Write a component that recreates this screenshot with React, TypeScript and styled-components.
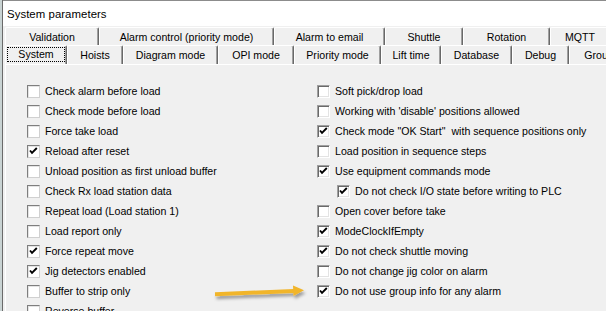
import React from "react";
import styled, { createGlobalStyle, css } from "styled-components";

const Global = createGlobalStyle`
  html, body { margin: 0; padding: 0; background: #dfe5e5; }
  body { font-family: "Liberation Sans", Arial, sans-serif; }
  #root { width: 606px; height: 311px; overflow: hidden; }
`;

const Screen = styled.div`
  position: relative;
  width: 606px;
  height: 311px;
  overflow: hidden;
  padding-left: 2px;
  box-sizing: border-box;
  background: #c9d3d3;
`;

const Frame = styled.div`
  display: flex;
  flex-direction: column;
  height: 100%;
  overflow: hidden;
  border-left: 1px solid #6a6a6a;
  background: #f0f0f0;
`;

const TitleBar = styled.div`
  flex: 0 0 25px;
  height: 25px;
  border-top: 1px solid #8c8c8c;
  background: #ffffff;
  display: flex;
  align-items: center;
  padding-left: 4px;
  font-size: 11.4px;
  color: #000;
  letter-spacing: 0.05px;
`;

const TabArea = styled.div`
  flex: 0 0 auto;
  display: flex;
  flex-direction: column;
  padding-top: 1px;
  padding-left: 2px;
`;

const TabRow = styled.div<{ $h: number }>`
  display: flex;
  flex: 0 0 ${(p) => p.$h}px;
  height: ${(p) => p.$h}px;
  white-space: nowrap;
  overflow: hidden;
`;

const Tab = styled.div<{ $w: number; $top: number }>`
  flex: 0 0 ${(p) => p.$w}px;
  box-sizing: border-box;
  display: flex;
  justify-content: center;
  align-items: flex-start;
  padding-top: ${(p) => p.$top}px;
  background: #f0f0f0;
  border-top: 1px solid #ffffff;
  border-left: 1px solid #ffffff;
  border-right: 1px solid #696969;
  box-shadow: inset -1px 0 0 #a0a0a0;
  border-radius: 2px 2px 0 0;
  font-size: 10.6px;
  color: #000;
`;

const TabLabel = styled.span<{ $focus?: boolean }>`
  padding: 1px 6px;
  ${(p) =>
    p.$focus &&
    css`
      outline: 1px dotted #000;
      outline-offset: 0;
      padding: 0 10px 1px;
    `}
`;

const Panel = styled.div`
  flex: 1 1 auto;
  min-height: 0;
  overflow: hidden;
  border-top: 1px solid #ffffff;
  border-left: 1px solid #ffffff;
  margin-left: 2px;
  padding: 16px 0 0 21px;
  display: grid;
  grid-template-columns: 290px 1fr;
  align-content: start;
`;

const Column = styled.div`
  display: flex;
  flex-direction: column;
`;

const Row = styled.div<{ $indent?: boolean }>`
  flex: 0 0 20px;
  height: 20px;
  display: flex;
  align-items: center;
  gap: 5px;
  padding-left: ${(p) => (p.$indent ? 20 : 0)}px;
  font-size: 10.6px;
  color: #000;
  white-space: pre;
`;

const Box = styled.span<{ $dark?: boolean }>`
  flex: 0 0 13px;
  width: 13px;
  height: 13px;
  box-sizing: border-box;
  background: #ffffff;
  border: 1px solid;
  border-color: ${(p) =>
    p.$dark ? "#a0a0a0 #ffffff #ffffff #a0a0a0" : "#7e7e7e #d0d0d0 #d0d0d0 #7e7e7e"};
  box-shadow: ${(p) =>
    p.$dark ? "inset 1px 1px 0 #696969, inset -1px -1px 0 #e3e3e3" : "inset 1px 1px 0 #e4e4e4"};
  display: flex;
  align-items: center;
  justify-content: center;
`;

const Arrow = styled.svg`
  position: absolute;
  left: 208px;
  top: 278px;
  overflow: visible;
`;

const Check = () => (
  <svg width="11" height="11" viewBox="0 0 11 11">
    <path d="M2 4.5 L4 6.8 L8.8 2" fill="none" stroke="#000" strokeWidth="1.9" />
  </svg>
);

type Item = { label: string; checked?: boolean; indent?: boolean };

const leftItems: Item[] = [
  { label: "Check alarm before load" },
  { label: "Check mode before load" },
  { label: "Force take load" },
  { label: "Reload after reset", checked: true },
  { label: "Unload position as first unload buffer" },
  { label: "Check Rx load station data" },
  { label: "Repeat load (Load station 1)" },
  { label: "Load report only" },
  { label: "Force repeat move", checked: true },
  { label: "Jig detectors enabled", checked: true },
  { label: "Buffer to strip only" },
  { label: "Reverse buffer" },
];

const rightItems: Item[] = [
  { label: "Soft pick/drop load" },
  { label: "Working with 'disable' positions allowed" },
  { label: 'Check mode "OK Start"  with sequence positions only', checked: true },
  { label: "Load position in sequence steps" },
  { label: "Use equipment commands mode", checked: true },
  { label: "Do not check I/O state before writing to PLC", checked: true, indent: true },
  { label: "Open cover before take" },
  { label: "ModeClockIfEmpty", checked: true },
  { label: "Do not check shuttle moving", checked: true },
  { label: "Do not change jig color on alarm" },
  { label: "Do not use group info for any alarm", checked: true },
];

const backTabs = [
  { label: "Validation", w: 94 },
  { label: "Alarm control (priority mode)", w: 175 },
  { label: "Alarm to email", w: 111 },
  { label: "Shuttle", w: 78 },
  { label: "Rotation", w: 87 },
  { label: "MQTT", w: 60 },
];

const frontTabs = [
  { label: "System", w: 62, focus: true },
  { label: "Hoists", w: 56 },
  { label: "Diagram mode", w: 95 },
  { label: "OPI mode", w: 76 },
  { label: "Priority mode", w: 87 },
  { label: "Lift time", w: 60 },
  { label: "Database", w: 71 },
  { label: "Debug", w: 57 },
  { label: "Group", w: 60 },
];

const CheckRow = ({ item, dark }: { item: Item; dark?: boolean }) => (
  <Row $indent={item.indent}>
    <Box $dark={dark}>{item.checked && <Check />}</Box>
    <span>{item.label}</span>
  </Row>
);

export default function App() {
  return (
    <>
      <Global />
      <Screen>
        <Frame>
          <TitleBar>System parameters</TitleBar>
          <TabArea>
            <TabRow $h={18}>
              {backTabs.map((t) => (
                <Tab key={t.label} $w={t.w} $top={2}>
                  <TabLabel>{t.label}</TabLabel>
                </Tab>
              ))}
            </TabRow>
            <TabRow $h={19}>
              {frontTabs.map((t) => (
                <Tab key={t.label} $w={t.w} $top={2}>
                  <TabLabel $focus={t.focus}>{t.label}</TabLabel>
                </Tab>
              ))}
            </TabRow>
          </TabArea>
          <Panel>
            <Column>
              {leftItems.map((it) => (
                <CheckRow key={it.label} item={it} />
              ))}
            </Column>
            <Column>
              {rightItems.map((it) => (
                <CheckRow key={it.label} item={it} dark />
              ))}
            </Column>
          </Panel>
        </Frame>
        <Arrow width="100" height="24" viewBox="0 0 100 24">
          <defs>
            <filter id="sh" x="-20%" y="-50%" width="140%" height="200%">
              <feDropShadow dx="1.5" dy="3" stdDeviation="1.5" floodColor="#000" floodOpacity="0.35" />
            </filter>
          </defs>
          <g filter="url(#sh)">
            <path d="M7 16.2 L86 13" stroke="#f1b52c" strokeWidth="4" fill="none" />
            <path d="M85 7.5 L96 12.3 L85.5 18 Z" fill="#f1b52c" />
          </g>
        </Arrow>
      </Screen>
    </>
  );
}
